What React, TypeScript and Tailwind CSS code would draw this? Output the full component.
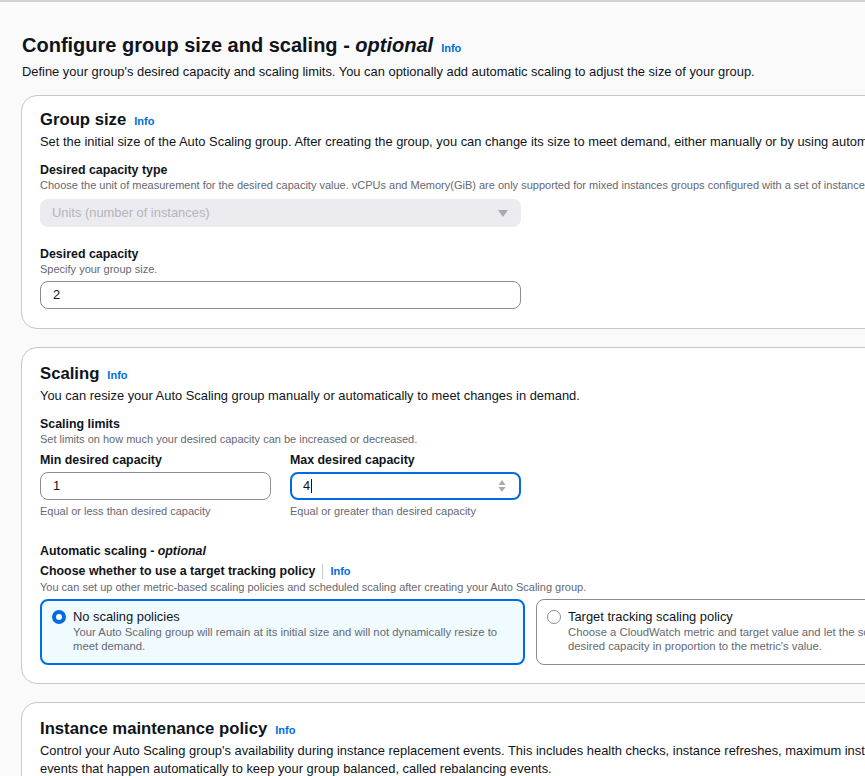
import React from "react";

const Info = ({ className = "" }: { className?: string }) => (
  <span className={`text-[11px] font-bold text-[#006ce0] ${className}`}>Info</span>
);

const Card = ({ children, className = "" }: { children: React.ReactNode; className?: string }) => (
  <div className={`ml-[21px] w-[880px] rounded-[16px] border border-[#c6c6cd] bg-white pl-[18px] pr-4 ${className}`}>
    {children}
  </div>
);

const Label = ({ children }: { children: React.ReactNode }) => (
  <div className="text-[12.4px] font-bold leading-[16px] text-[#0f141a]">{children}</div>
);

const Hint = ({ children }: { children: React.ReactNode }) => (
  <div className="text-[11px] leading-[15px] text-[#656871] whitespace-nowrap">{children}</div>
);

const App = () => {
  return (
    <div
      className="min-h-[776px] w-[865px] overflow-hidden border-t-2 border-[#d1d1d6] bg-[#fafafa] text-[#0f141a]"
      style={{ fontFamily: '"Liberation Sans", Arial, sans-serif' }}
    >
      {/* page header */}
      <div className="pl-[22px] pt-[29px]">
        <h1 className="flex items-baseline gap-2 whitespace-nowrap text-[20px] font-bold leading-[28px]">
          <span>
            Configure group size and scaling - <i>optional</i>
          </span>
          <Info />
        </h1>
        <p className="whitespace-nowrap text-[12.9px] leading-[20px]">
          Define your group's desired capacity and scaling limits. You can optionally add automatic scaling to adjust
          the size of your group.
        </p>
      </div>

      {/* group size */}
      <Card className="mt-[13px] h-[234px] pt-[12px]">
        <h2 className="flex items-baseline gap-2 text-[16.7px] font-bold leading-[24px]">
          Group size <Info />
        </h2>
        <p className="whitespace-nowrap text-[12.9px] leading-[18px]">
          Set the initial size of the Auto Scaling group. After creating the group, you can change its size to meet
          demand, either manually or by using automatic scaling.
        </p>
        <div className="mt-[11px]">
          <Label>Desired capacity type</Label>
          <Hint>
            Choose the unit of measurement for the desired capacity value. vCPUs and Memory(GiB) are only supported for
            mixed instances groups configured with a set of instance attributes.
          </Hint>
          <div className="mt-[6px] flex h-[28px] w-[481px] items-center justify-between rounded-[8px] bg-[#ebebf0] pl-3 pr-[13px] text-[12.9px] text-[#b4b4bb]">
            <span>Units (number of instances)</span>
            <svg width="10" height="7" viewBox="0 0 10 7">
              <path d="M0 0h10L5 7z" fill="#a9a9b0" />
            </svg>
          </div>
        </div>
        <div className="mt-[19px]">
          <Label>Desired capacity</Label>
          <Hint>Specify your group size.</Hint>
          <div className="mt-[4px] flex h-[28px] w-[481px] items-center rounded-[8px] border border-[#8c8c94] bg-white pl-3 text-[12.9px]">
            2
          </div>
        </div>
      </Card>

      {/* scaling */}
      <Card className="mt-[18px] h-[337px] pt-[14px]">
        <h2 className="flex items-baseline gap-2 text-[16.7px] font-bold leading-[24px]">
          Scaling <Info />
        </h2>
        <p className="whitespace-nowrap text-[12.9px] leading-[18px]">
          You can resize your Auto Scaling group manually or automatically to meet changes in demand.
        </p>
        <div className="mt-[11px]">
          <Label>Scaling limits</Label>
          <Hint>Set limits on how much your desired capacity can be increased or decreased.</Hint>
        </div>
        <div className="mt-[5px] flex gap-[19px]">
          <div className="w-[231px]">
            <Label>Min desired capacity</Label>
            <div className="mt-[4px] flex h-[28px] items-center rounded-[8px] border border-[#8c8c94] bg-white pl-3 text-[12.9px]">
              1
            </div>
            <div className="mt-[4px]">
              <Hint>Equal or less than desired capacity</Hint>
            </div>
          </div>
          <div className="w-[231px]">
            <Label>Max desired capacity</Label>
            <div className="mt-[4px] flex h-[28px] items-center justify-between rounded-[8px] border-2 border-[#006ce0] bg-white pl-[11px] pr-[13px] text-[12.9px]">
              <span className="flex items-center">
                4<span className="ml-px inline-block h-[14px] w-px bg-[#0f141a]" />
              </span>
              <svg width="8" height="16" viewBox="0 0 8 16">
                <path d="M4 2l3.5 5h-7z" fill="#a9a9b0" />
                <path d="M4 14l3.5-5h-7z" fill="#a9a9b0" />
              </svg>
            </div>
            <div className="mt-[4px]">
              <Hint>Equal or greater than desired capacity</Hint>
            </div>
          </div>
        </div>

        <div className="mt-[24px]">
          <Label>
            Automatic scaling - <i>optional</i>
          </Label>
          <div className="mt-[4px] flex items-center">
            <Label>Choose whether to use a target tracking policy</Label>
            <span className="mx-[7px] h-[15px] w-px bg-[#c6c6cd]" />
            <Info />
          </div>
          <Hint>
            You can set up other metric-based scaling policies and scheduled scaling after creating your Auto Scaling
            group.
          </Hint>
        </div>

        <div className="mt-[4px] flex gap-[11px]">
          <div className="flex h-[66px] w-[485px] shrink-0 gap-[7px] rounded-[8px] border-2 border-[#006ce0] bg-[#f0fbff] pl-[10px] pt-[7px]">
            <span className="mt-[2px] flex h-[14px] w-[14px] shrink-0 items-center justify-center rounded-full bg-[#006ce0]">
              <span className="h-[6px] w-[6px] rounded-full bg-white" />
            </span>
            <div>
              <div className="text-[12.9px] leading-[17px]">No scaling policies</div>
              <div className="w-[440px] text-[11.3px] leading-[14px] text-[#656871]">
                Your Auto Scaling group will remain at its initial size and will not dynamically resize to meet demand.
              </div>
            </div>
          </div>
          <div className="flex h-[66px] w-[400px] shrink-0 gap-[7px] rounded-[8px] border border-[#8c8c94] bg-white pl-[10px] pt-[8px]">
            <span className="mt-[2px] h-[14px] w-[14px] shrink-0 rounded-full border border-[#8c8c94] bg-white" />
            <div>
              <div className="text-[12.9px] leading-[17px]">Target tracking scaling policy</div>
              <div className="whitespace-nowrap text-[11.3px] leading-[14px] text-[#656871]">
                Choose a CloudWatch metric and target value and let the scaling policy adjust the
                <br />
                desired capacity in proportion to the metric's value.
              </div>
            </div>
          </div>
        </div>
      </Card>

      {/* instance maintenance */}
      <Card className="mt-[18px] h-[120px] pt-[14px]">
        <h2 className="flex items-baseline gap-2 text-[16.7px] font-bold leading-[24px]">
          Instance maintenance policy <Info />
        </h2>
        <p className="whitespace-nowrap text-[12.9px] leading-[18px]">
          Control your Auto Scaling group's availability during instance replacement events. This includes health
          checks, instance refreshes, maximum instance lifetime features, and
          <br />
          events that happen automatically to keep your group balanced, called rebalancing events.
        </p>
      </Card>
    </div>
  );
};

export default App;
